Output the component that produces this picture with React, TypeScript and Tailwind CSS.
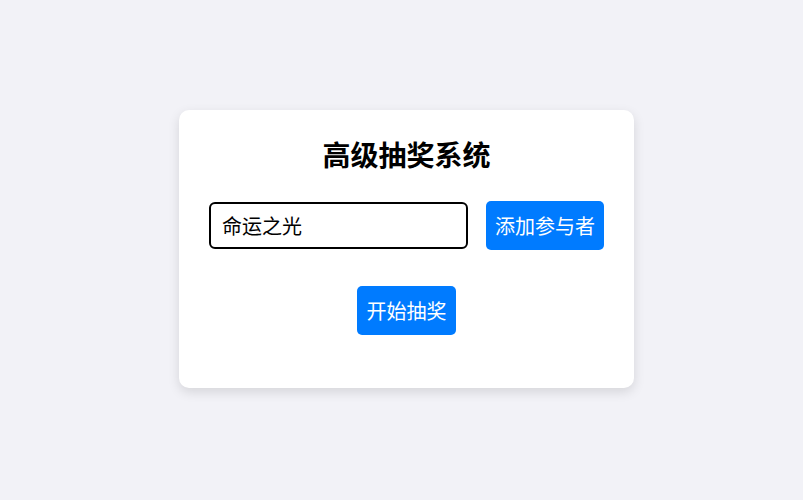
import React from "react";

export default function App() {
  return (
    <div
      className="w-[803px] h-[500px] bg-[#f2f2f7] flex items-start justify-center pt-[110px] pl-[10px]"
      style={{ fontFamily: '"Noto Sans CJK SC", "Noto Sans", sans-serif' }}
    >
      <div className="w-[455px] h-[278px] bg-white rounded-[10px] shadow-[0_4px_12px_rgba(0,0,0,0.12)] px-[30px] pt-[27px] flex flex-col items-center">
        <h1 className="text-[28px] leading-[34px] h-[34px] font-bold text-black">高级抽奖系统</h1>
        <div className="mt-[30px] flex items-center gap-[18px] w-full">
          <input
            className="w-[259px] h-[47px] border-2 border-black rounded-[6px] px-[11px] text-[20px] text-black outline-none"
            defaultValue="命运之光"
          />
          <button className="h-[49px] w-[118px] bg-[#007bff] text-white text-[20px] rounded-[5px] flex items-center justify-center">
            添加参与者
          </button>
        </div>
        <button className="mt-[36px] h-[49px] w-[99px] bg-[#007bff] text-white text-[20px] rounded-[5px] flex items-center justify-center">
          开始抽奖
        </button>
      </div>
    </div>
  );
}
